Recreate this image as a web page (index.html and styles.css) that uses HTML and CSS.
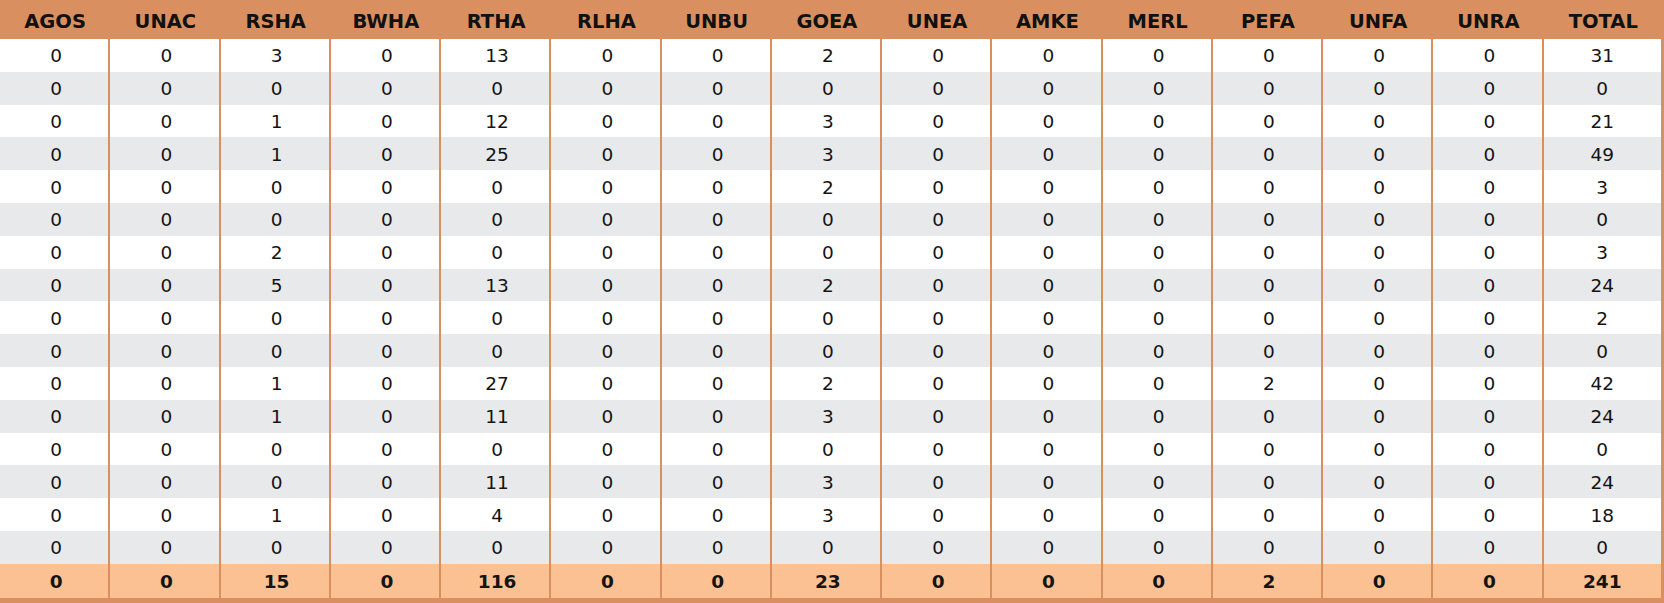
FILE: index.html
```html
<!DOCTYPE html>
<html>
<head>
<meta charset="utf-8">
<link rel="stylesheet" href="styles.css">
</head>
<body>
<div class="table" id="t">
  <div class="row head">
    <div class="cell">AGOS</div><div class="cell">UNAC</div><div class="cell">RSHA</div><div class="cell">BWHA</div><div class="cell">RTHA</div><div class="cell">RLHA</div><div class="cell">UNBU</div><div class="cell">GOEA</div><div class="cell">UNEA</div><div class="cell">AMKE</div><div class="cell">MERL</div><div class="cell">PEFA</div><div class="cell">UNFA</div><div class="cell">UNRA</div><div class="cell">TOTAL</div>
  </div>
  <div class="row"><div class="cell">0</div><div class="cell">0</div><div class="cell">3</div><div class="cell">0</div><div class="cell">13</div><div class="cell">0</div><div class="cell">0</div><div class="cell">2</div><div class="cell">0</div><div class="cell">0</div><div class="cell">0</div><div class="cell">0</div><div class="cell">0</div><div class="cell">0</div><div class="cell">31</div></div>
  <div class="row alt"><div class="cell">0</div><div class="cell">0</div><div class="cell">0</div><div class="cell">0</div><div class="cell">0</div><div class="cell">0</div><div class="cell">0</div><div class="cell">0</div><div class="cell">0</div><div class="cell">0</div><div class="cell">0</div><div class="cell">0</div><div class="cell">0</div><div class="cell">0</div><div class="cell">0</div></div>
  <div class="row"><div class="cell">0</div><div class="cell">0</div><div class="cell">1</div><div class="cell">0</div><div class="cell">12</div><div class="cell">0</div><div class="cell">0</div><div class="cell">3</div><div class="cell">0</div><div class="cell">0</div><div class="cell">0</div><div class="cell">0</div><div class="cell">0</div><div class="cell">0</div><div class="cell">21</div></div>
  <div class="row alt"><div class="cell">0</div><div class="cell">0</div><div class="cell">1</div><div class="cell">0</div><div class="cell">25</div><div class="cell">0</div><div class="cell">0</div><div class="cell">3</div><div class="cell">0</div><div class="cell">0</div><div class="cell">0</div><div class="cell">0</div><div class="cell">0</div><div class="cell">0</div><div class="cell">49</div></div>
  <div class="row"><div class="cell">0</div><div class="cell">0</div><div class="cell">0</div><div class="cell">0</div><div class="cell">0</div><div class="cell">0</div><div class="cell">0</div><div class="cell">2</div><div class="cell">0</div><div class="cell">0</div><div class="cell">0</div><div class="cell">0</div><div class="cell">0</div><div class="cell">0</div><div class="cell">3</div></div>
  <div class="row alt"><div class="cell">0</div><div class="cell">0</div><div class="cell">0</div><div class="cell">0</div><div class="cell">0</div><div class="cell">0</div><div class="cell">0</div><div class="cell">0</div><div class="cell">0</div><div class="cell">0</div><div class="cell">0</div><div class="cell">0</div><div class="cell">0</div><div class="cell">0</div><div class="cell">0</div></div>
  <div class="row"><div class="cell">0</div><div class="cell">0</div><div class="cell">2</div><div class="cell">0</div><div class="cell">0</div><div class="cell">0</div><div class="cell">0</div><div class="cell">0</div><div class="cell">0</div><div class="cell">0</div><div class="cell">0</div><div class="cell">0</div><div class="cell">0</div><div class="cell">0</div><div class="cell">3</div></div>
  <div class="row alt"><div class="cell">0</div><div class="cell">0</div><div class="cell">5</div><div class="cell">0</div><div class="cell">13</div><div class="cell">0</div><div class="cell">0</div><div class="cell">2</div><div class="cell">0</div><div class="cell">0</div><div class="cell">0</div><div class="cell">0</div><div class="cell">0</div><div class="cell">0</div><div class="cell">24</div></div>
  <div class="row"><div class="cell">0</div><div class="cell">0</div><div class="cell">0</div><div class="cell">0</div><div class="cell">0</div><div class="cell">0</div><div class="cell">0</div><div class="cell">0</div><div class="cell">0</div><div class="cell">0</div><div class="cell">0</div><div class="cell">0</div><div class="cell">0</div><div class="cell">0</div><div class="cell">2</div></div>
  <div class="row alt"><div class="cell">0</div><div class="cell">0</div><div class="cell">0</div><div class="cell">0</div><div class="cell">0</div><div class="cell">0</div><div class="cell">0</div><div class="cell">0</div><div class="cell">0</div><div class="cell">0</div><div class="cell">0</div><div class="cell">0</div><div class="cell">0</div><div class="cell">0</div><div class="cell">0</div></div>
  <div class="row"><div class="cell">0</div><div class="cell">0</div><div class="cell">1</div><div class="cell">0</div><div class="cell">27</div><div class="cell">0</div><div class="cell">0</div><div class="cell">2</div><div class="cell">0</div><div class="cell">0</div><div class="cell">0</div><div class="cell">2</div><div class="cell">0</div><div class="cell">0</div><div class="cell">42</div></div>
  <div class="row alt"><div class="cell">0</div><div class="cell">0</div><div class="cell">1</div><div class="cell">0</div><div class="cell">11</div><div class="cell">0</div><div class="cell">0</div><div class="cell">3</div><div class="cell">0</div><div class="cell">0</div><div class="cell">0</div><div class="cell">0</div><div class="cell">0</div><div class="cell">0</div><div class="cell">24</div></div>
  <div class="row"><div class="cell">0</div><div class="cell">0</div><div class="cell">0</div><div class="cell">0</div><div class="cell">0</div><div class="cell">0</div><div class="cell">0</div><div class="cell">0</div><div class="cell">0</div><div class="cell">0</div><div class="cell">0</div><div class="cell">0</div><div class="cell">0</div><div class="cell">0</div><div class="cell">0</div></div>
  <div class="row alt"><div class="cell">0</div><div class="cell">0</div><div class="cell">0</div><div class="cell">0</div><div class="cell">11</div><div class="cell">0</div><div class="cell">0</div><div class="cell">3</div><div class="cell">0</div><div class="cell">0</div><div class="cell">0</div><div class="cell">0</div><div class="cell">0</div><div class="cell">0</div><div class="cell">24</div></div>
  <div class="row"><div class="cell">0</div><div class="cell">0</div><div class="cell">1</div><div class="cell">0</div><div class="cell">4</div><div class="cell">0</div><div class="cell">0</div><div class="cell">3</div><div class="cell">0</div><div class="cell">0</div><div class="cell">0</div><div class="cell">0</div><div class="cell">0</div><div class="cell">0</div><div class="cell">18</div></div>
  <div class="row alt"><div class="cell">0</div><div class="cell">0</div><div class="cell">0</div><div class="cell">0</div><div class="cell">0</div><div class="cell">0</div><div class="cell">0</div><div class="cell">0</div><div class="cell">0</div><div class="cell">0</div><div class="cell">0</div><div class="cell">0</div><div class="cell">0</div><div class="cell">0</div><div class="cell">0</div></div>
  <div class="row total"><div class="cell">0</div><div class="cell">0</div><div class="cell">15</div><div class="cell">0</div><div class="cell">116</div><div class="cell">0</div><div class="cell">0</div><div class="cell">23</div><div class="cell">0</div><div class="cell">0</div><div class="cell">0</div><div class="cell">2</div><div class="cell">0</div><div class="cell">0</div><div class="cell">241</div></div>
</div>
</body>
</html>
```

FILE: styles.css
```css
html, body {
  margin: 0;
  padding: 0;
  background: #ffffff;
}

.table {
  width: 1664px;
  font-family: "DejaVu Sans", "Noto Sans", sans-serif;
  color: #141414;
  border-bottom: 6px solid #d98f60;
}

.row {
  display: grid;
  grid-template-columns: repeat(14, 110.25px) 1fr;
  height: 32.8px;
  background: #ffffff;
}

.row.alt {
  background: #e8e9eb;
}

.cell {
  box-sizing: border-box;
  display: flex;
  align-items: center;
  justify-content: center;
  border-right: 2px solid #d9905f;
  font-size: 18.5px;
  font-weight: 400;
  padding-top: 1px;
  padding-left: 4px;
}

.cell:last-child {
  border-right: 3px solid #d9905f;
  padding-left: 0;
}

.row.head {
  height: 39px;
  background: #d98f60;
}

.row.head .cell {
  border-right-color: #d98f60;
  font-weight: 700;
  font-size: 19.5px;
  padding-top: 4px;
  padding-left: 2px;
  color: #111111;
}

.row.total {
  height: 34px;
  background: #fbc193;
}

.row.total .cell {
  font-weight: 700;
  font-size: 18.5px;
}
```
